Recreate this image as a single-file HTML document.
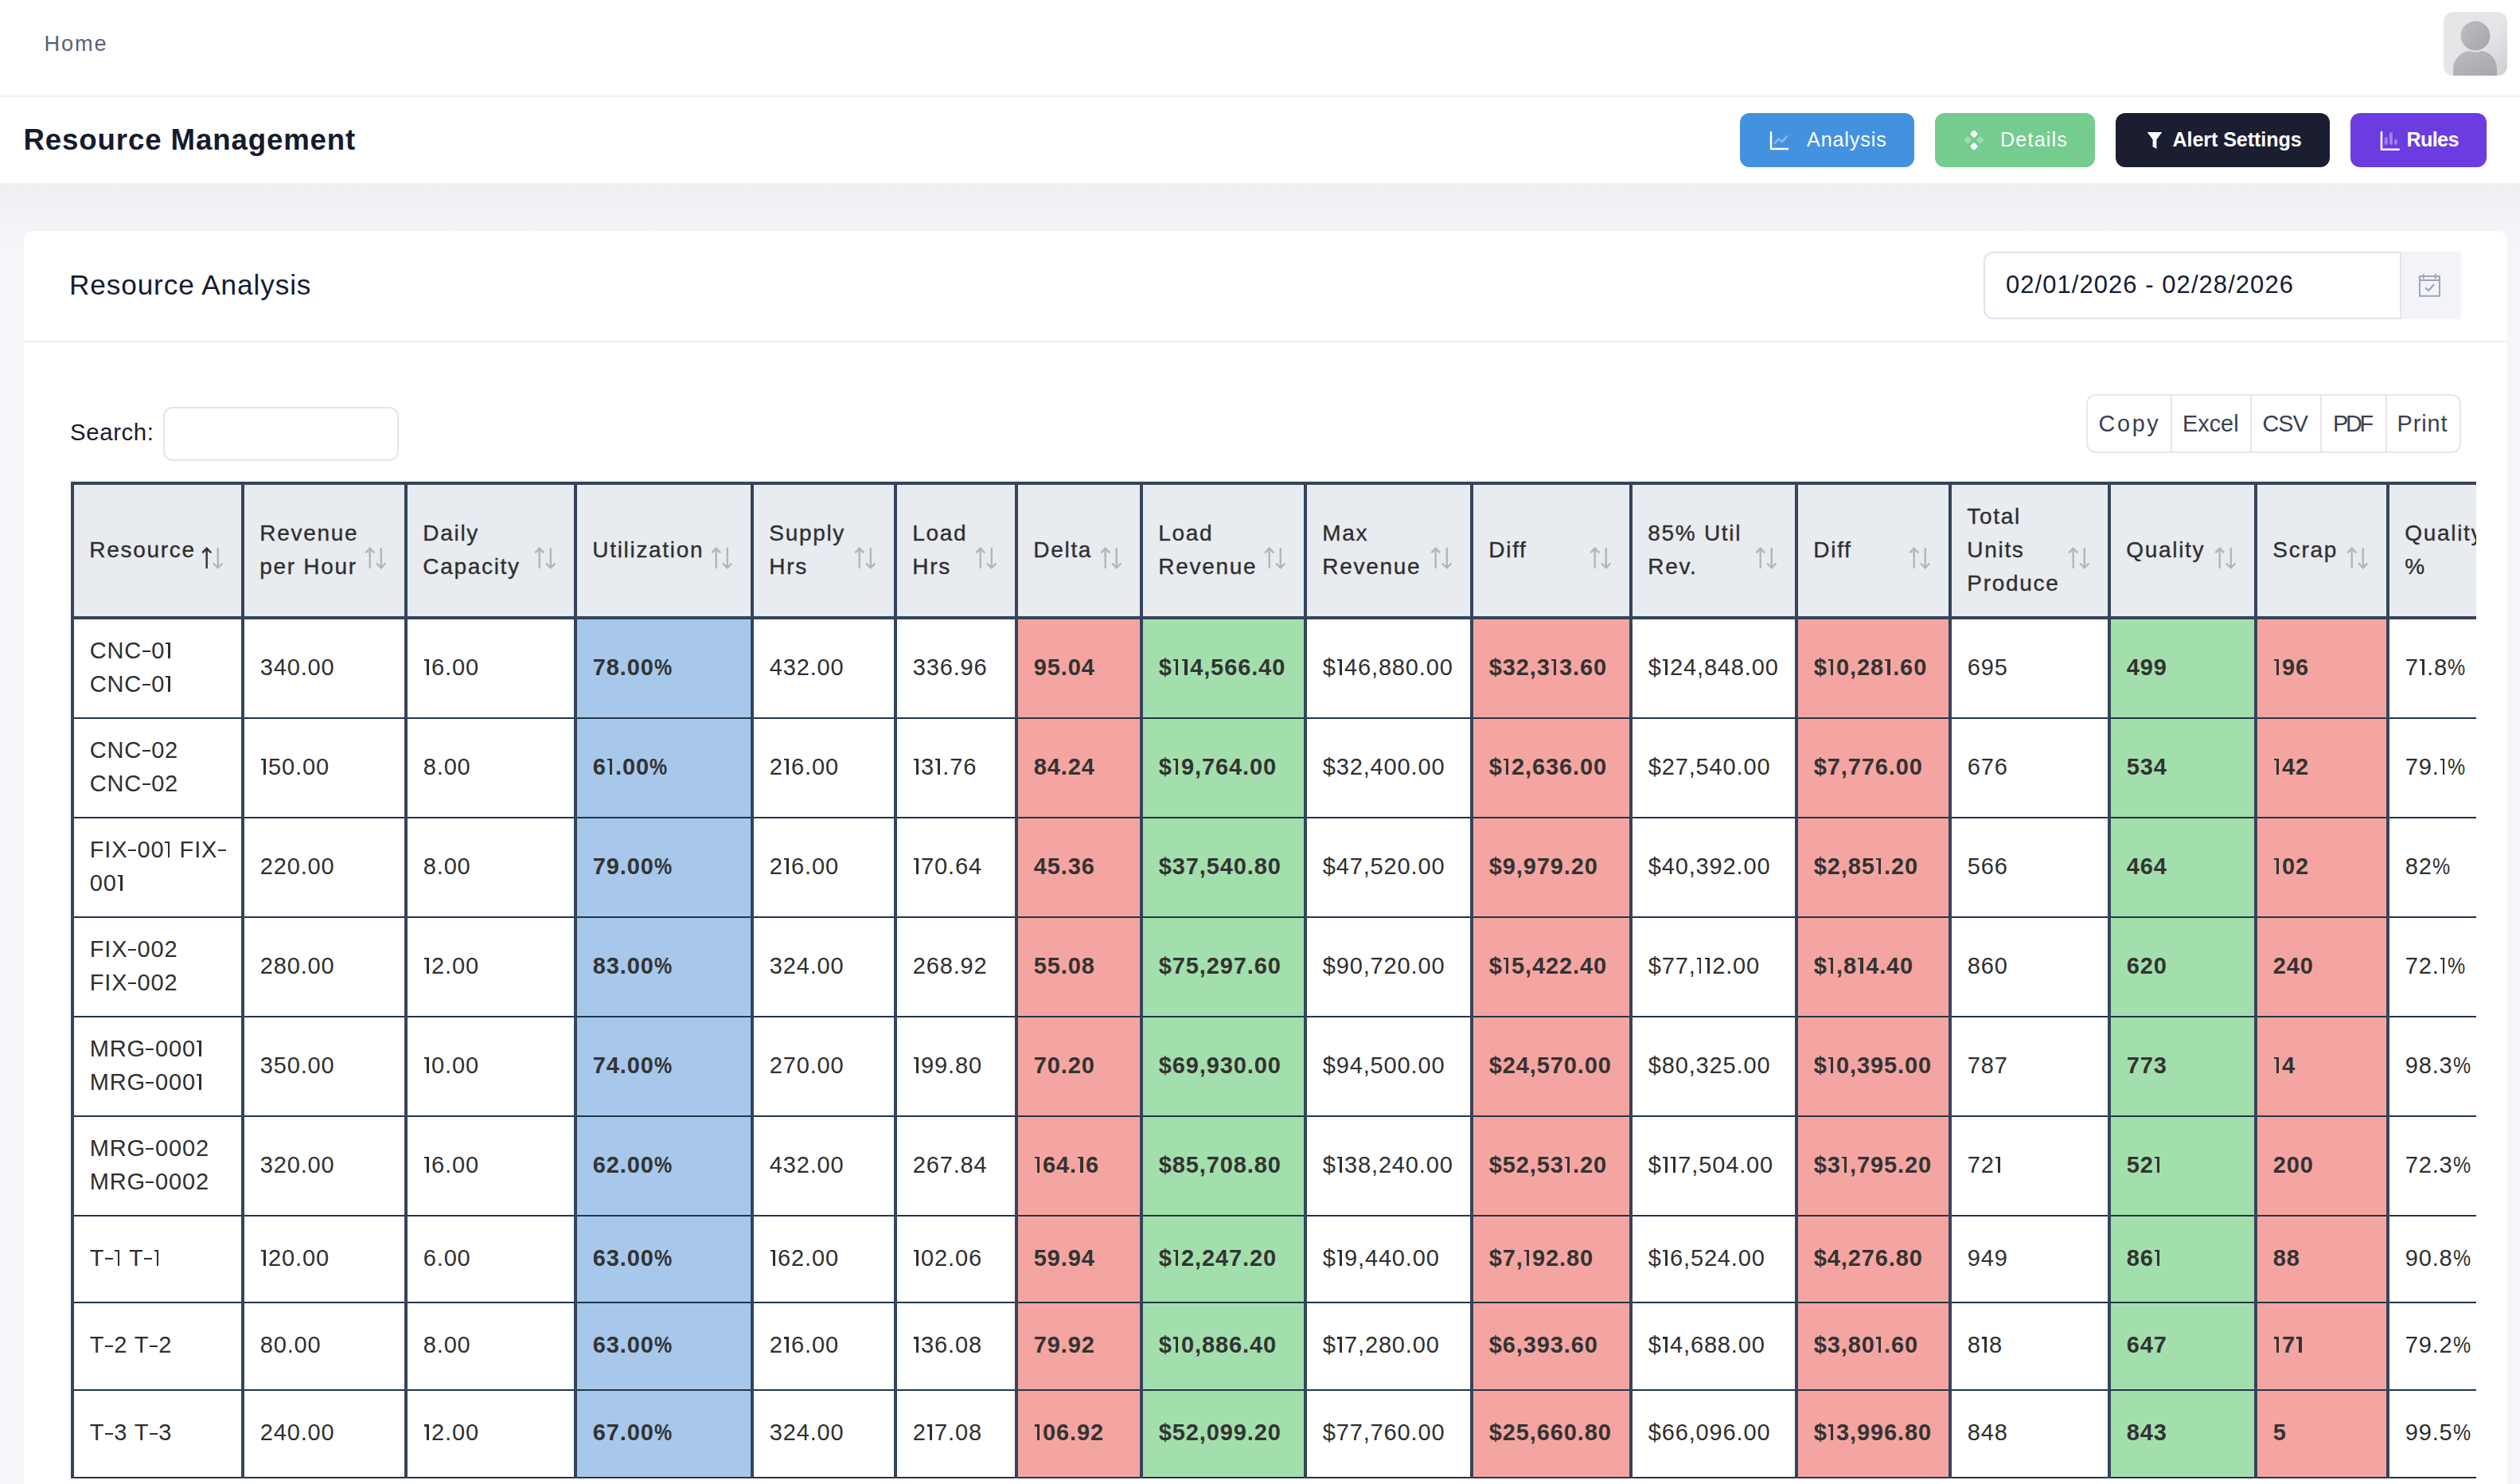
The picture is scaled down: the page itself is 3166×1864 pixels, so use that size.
<!DOCTYPE html>
<html>
<head>
<meta charset="utf-8">
<style>
*{box-sizing:border-box;margin:0;padding:0}
html,body{width:3166px;height:1864px;overflow:hidden;background:#f5f6f9}
body{font-family:"Liberation Sans",sans-serif;position:relative;color:#161b33}
.abs{position:absolute}
.t{position:absolute;white-space:nowrap}
#topbar{left:0;top:0;width:3166px;height:122px;background:#fff;border-bottom:2px solid #eef0f4}
#avatar{left:3070px;top:15px;width:80px;height:80px;border-radius:12px;overflow:hidden;background:linear-gradient(135deg,#e6e7e9 0%,#e4e5e7 55%,#cdced2 100%)}
#titlebar{left:0;top:122px;width:3166px;height:108px;background:#fff}
.btn{position:absolute;top:142px;height:68px;border-radius:12px}
.btn svg{position:absolute}
#grayshade{left:0;top:230px;width:3166px;height:80px;background:linear-gradient(#eeeff3,#f5f6f9)}
#card{left:30px;top:290px;width:3120px;height:1700px;background:#fff;border-radius:12px}
#cardhead{left:30px;top:428px;width:3120px;height:2px;background:#eff0f4}
#dateinput{left:2492px;top:316px;width:525px;height:85px;border:2px solid #e3e2ee;border-right:none;border-radius:12px 0 0 12px;background:#fff}
#dateaddon{left:3015px;top:316px;width:77px;height:85px;background:#f3f4f8;border-left:2px solid #e3e2ee}
#searchinput{left:205px;top:511px;width:296px;height:68px;border:2px solid #e4e3ee;border-radius:12px;background:#fff}
#btngroup{left:2621px;top:495px;width:471px;height:74px;border:2px solid #e6e6ee;border-radius:12px;background:#fff}
.gdiv{position:absolute;top:497px;width:2px;height:70px;background:#e6e6ee}
#tw .th{position:absolute;white-space:nowrap}
#tw .td{position:absolute;white-space:nowrap}
#tw .si{position:absolute}
#tw .si path{fill:none;stroke-width:2.4}
@media (min-resolution: 2dppx){html{zoom:0.5}}
</style>
</head>
<body>
<div id="topbar" class="abs"></div>
<div id="avatar" class="abs">
  <svg width="80" height="80" viewBox="0 0 80 80">
    <defs><linearGradient id="ag" x1="0" y1="0" x2="1" y2="1"><stop offset="0" stop-color="#bcbdc0"/><stop offset="1" stop-color="#a6a7ab"/></linearGradient></defs>
    <circle cx="40" cy="30" r="18.5" fill="url(#ag)"/>
    <path d="M12 80 V72 C12 58 24 49 33 49 Q40 52 47 49 C56 49 67 58 67 72 V80 Z" fill="url(#ag)"/>
  </svg>
</div>
<div id="titlebar" class="abs"></div>
<div class="btn" style="left:2186px;width:219px;background:#4392e0">
  <svg style="left:37px;top:22px" width="26" height="26" viewBox="0 0 26 26"><path d="M2 2.2 V23 H23" fill="none" stroke="#fff" stroke-width="2.5" stroke-linecap="round" stroke-linejoin="round"/><path d="M6.7 15.7 L11.6 10.4 L16.1 14.3 L21.9 7.1" fill="none" stroke="#fff" stroke-opacity="0.35" stroke-width="2.5" stroke-linecap="round" stroke-linejoin="round"/></svg>
</div>
<div class="btn" style="left:2431px;width:201px;background:#74cc8f">
  <svg style="left:36.5px;top:22.4px" width="24" height="24" viewBox="0 0 26 26"><rect x="9" y="0.5" width="8" height="8" rx="2.2" transform="rotate(45 13 4.5)" fill="#fff"/><rect x="9" y="17.5" width="8" height="8" rx="2.2" transform="rotate(45 13 21.5)" fill="#fff"/><rect x="0.5" y="9" width="8" height="8" rx="2.2" transform="rotate(45 4.5 13)" fill="#fff" fill-opacity="0.32"/><rect x="17.5" y="9" width="8" height="8" rx="2.2" transform="rotate(45 21.5 13)" fill="#fff" fill-opacity="0.32"/></svg>
</div>
<div class="btn" style="left:2658px;width:269px;background:#1b1d31">
  <svg style="left:39px;top:24px" width="20" height="22" viewBox="0 0 20 22"><path d="M0.7 0 H19.3 L12.4 9.3 V21 L7.6 18.3 V9.3 Z" fill="#fff"/></svg>
</div>
<div class="btn" style="left:2953px;width:171px;background:#6c3ce1">
  <svg style="left:37px;top:22px" width="26" height="26" viewBox="0 0 26 26"><path d="M2 2 V23.8 H23.8" fill="none" stroke="#fff" stroke-width="2.6" stroke-linecap="round" stroke-linejoin="round"/><rect x="5.8" y="8" width="3.9" height="10" rx="1.95" fill="#fff" fill-opacity="0.35"/><rect x="12" y="1.9" width="3.9" height="16.1" rx="1.95" fill="#fff" fill-opacity="0.35"/><rect x="18" y="10.7" width="3.9" height="7.3" rx="1.95" fill="#fff" fill-opacity="0.35"/></svg>
</div>
<div id="grayshade" class="abs"></div>
<div id="card" class="abs"></div>
<div id="dateinput" class="abs"></div>
<div id="dateaddon" class="abs">
  <svg style="position:absolute;left:21px;top:27px" width="30" height="30" viewBox="0 0 30 30"><rect x="2" y="4" width="25" height="24.8" fill="none" stroke="#a0a4b6" stroke-width="2"/><path d="M2 9 H27" stroke="#a0a4b6" stroke-width="2"/><path d="M6.9 2 V6.5 M21.9 2 V6.5" stroke="#a0a4b6" stroke-width="2" stroke-linecap="round"/><path d="M9 18.4 L13.2 21.9 L20.2 14" fill="none" stroke="#a0a4b6" stroke-width="2.2"/></svg>
</div>
<div id="cardhead" class="abs"></div>
<div id="searchinput" class="abs"></div>
<div id="btngroup" class="abs"></div>
<div class="gdiv" style="left:2727px"></div>
<div class="gdiv" style="left:2827px"></div>
<div class="gdiv" style="left:2915px"></div>
<div class="gdiv" style="left:2997px"></div>
<div id="home" class="t" style="left:55.50px;top:29.88px;font-size:27.18px;line-height:50px;color:#5b6078;font-weight:normal;letter-spacing:1.90px">Home</div><div id="title" class="t" style="left:29.50px;top:150.70px;font-size:36.63px;line-height:50px;color:#151a2e;font-weight:bold;letter-spacing:0.88px">Resource Management</div><div id="ratitle" class="t" style="left:87.00px;top:333.31px;font-size:35.18px;line-height:50px;color:#161b33;font-weight:normal;letter-spacing:0.88px">Resource Analysis</div><div id="datetext" class="t" style="left:2520.00px;top:333.17px;font-size:30.96px;line-height:50px;color:#161b33;font-weight:normal;letter-spacing:1.07px">02/01/2026 - 02/28/2026</div><div id="search" class="t" style="left:88.00px;top:518.32px;font-size:29.36px;line-height:50px;color:#161b33;font-weight:normal;letter-spacing:0.63px">Search:</div><div id="copy" class="t" style="left:2636.50px;top:506.82px;font-size:28.78px;line-height:50px;color:#3a3f51;font-weight:normal;letter-spacing:2.70px">Copy</div><div id="excel" class="t" style="left:2742.00px;top:506.82px;font-size:28.78px;line-height:50px;color:#3a3f51;font-weight:normal;letter-spacing:0.05px">Excel</div><div id="csv" class="t" style="left:2842.50px;top:506.82px;font-size:28.78px;line-height:50px;color:#3a3f51;font-weight:normal;letter-spacing:-0.90px">CSV</div><div id="pdf" class="t" style="left:2931.00px;top:506.82px;font-size:28.78px;line-height:50px;color:#3a3f51;font-weight:normal;letter-spacing:-3.20px">PDF</div><div id="print" class="t" style="left:3011.50px;top:506.82px;font-size:28.78px;line-height:50px;color:#3a3f51;font-weight:normal;letter-spacing:0.95px">Print</div><div id="analysis" class="t" style="left:2270.00px;top:150.28px;font-size:25.15px;line-height:50px;color:#ffffff;font-weight:normal;letter-spacing:0.87px">Analysis</div><div id="details" class="t" style="left:2513.00px;top:150.28px;font-size:25.15px;line-height:50px;color:#ffffff;font-weight:normal;letter-spacing:1.17px">Details</div><div id="alert" class="t" style="left:2729.50px;top:150.28px;font-size:25.15px;line-height:50px;color:#ffffff;font-weight:bold;letter-spacing:-0.10px">Alert Settings</div><div id="rules" class="t" style="left:3023.50px;top:150.28px;font-size:25.15px;line-height:50px;color:#ffffff;font-weight:bold;letter-spacing:-0.65px">Rules</div><div id="tw" style="position:absolute;left:89px;top:605px;width:3022px;height:1259px;overflow:hidden;background:#fff">
<div style="position:absolute;left:0px;top:0px;width:3121px;height:173px;background:#e8ebf0"></div>
<div style="position:absolute;left:636px;top:173px;width:218px;height:1077px;background:#a7c8eb"></div>
<div style="position:absolute;left:1190px;top:173px;width:153px;height:1077px;background:#f4a5a2"></div>
<div style="position:absolute;left:1347px;top:173px;width:202px;height:1077px;background:#a3dfad"></div>
<div style="position:absolute;left:1762px;top:173px;width:196px;height:1077px;background:#f4a5a2"></div>
<div style="position:absolute;left:2170px;top:173px;width:189px;height:1077px;background:#f4a5a2"></div>
<div style="position:absolute;left:2563px;top:173px;width:180px;height:1077px;background:#a3dfad"></div>
<div style="position:absolute;left:2747px;top:173px;width:162px;height:1077px;background:#f4a5a2"></div>
<div style="position:absolute;left:0px;top:0px;width:3121px;height:4px;background:#35445a"></div>
<div style="position:absolute;left:0px;top:169px;width:3121px;height:4px;background:#35445a"></div>
<div style="position:absolute;left:0px;top:296px;width:3121px;height:2px;background:#23354a"></div>
<div style="position:absolute;left:0px;top:421px;width:3121px;height:2px;background:#23354a"></div>
<div style="position:absolute;left:0px;top:546px;width:3121px;height:2px;background:#23354a"></div>
<div style="position:absolute;left:0px;top:671px;width:3121px;height:2px;background:#23354a"></div>
<div style="position:absolute;left:0px;top:796px;width:3121px;height:2px;background:#23354a"></div>
<div style="position:absolute;left:0px;top:921px;width:3121px;height:2px;background:#23354a"></div>
<div style="position:absolute;left:0px;top:1030px;width:3121px;height:2px;background:#23354a"></div>
<div style="position:absolute;left:0px;top:1140px;width:3121px;height:2px;background:#23354a"></div>
<div style="position:absolute;left:0px;top:1250px;width:3121px;height:2px;background:#23354a"></div>
<div style="position:absolute;left:0px;top:0px;width:4px;height:1252px;background:#35445a"></div>
<div style="position:absolute;left:214px;top:0px;width:4px;height:1252px;background:#35445a"></div>
<div style="position:absolute;left:419px;top:0px;width:4px;height:1252px;background:#35445a"></div>
<div style="position:absolute;left:632px;top:0px;width:4px;height:1252px;background:#35445a"></div>
<div style="position:absolute;left:854px;top:0px;width:4px;height:1252px;background:#35445a"></div>
<div style="position:absolute;left:1034px;top:0px;width:4px;height:1252px;background:#35445a"></div>
<div style="position:absolute;left:1186px;top:0px;width:4px;height:1252px;background:#35445a"></div>
<div style="position:absolute;left:1343px;top:0px;width:4px;height:1252px;background:#35445a"></div>
<div style="position:absolute;left:1549px;top:0px;width:4px;height:1252px;background:#35445a"></div>
<div style="position:absolute;left:1758px;top:0px;width:4px;height:1252px;background:#35445a"></div>
<div style="position:absolute;left:1958px;top:0px;width:4px;height:1252px;background:#35445a"></div>
<div style="position:absolute;left:2166px;top:0px;width:4px;height:1252px;background:#35445a"></div>
<div style="position:absolute;left:2359px;top:0px;width:4px;height:1252px;background:#35445a"></div>
<div style="position:absolute;left:2559px;top:0px;width:4px;height:1252px;background:#35445a"></div>
<div style="position:absolute;left:2743px;top:0px;width:4px;height:1252px;background:#35445a"></div>
<div style="position:absolute;left:2909px;top:0px;width:4px;height:1252px;background:#35445a"></div>
<style>#tw .pc{display:inline-block;transform:scaleX(0.86);transform-origin:0 50%}#tw .hy{display:inline-block;position:relative;width:10.00px;height:19px;margin:0 1.50px 0 0.50px;vertical-align:baseline}#tw .hy::before{content:"";position:absolute;left:0;right:0;bottom:7.2px;height:2.2px;background:currentColor}</style>
<style>#tw .o1,#tw .b1{display:inline-block;position:relative;height:19.90px;vertical-align:baseline}#tw .o1::before,#tw .b1::before,#tw .o1::after,#tw .b1::after{content:"";position:absolute;top:0;background:currentColor}#tw .o1{width:5.80px;margin:0 3.50px 0 1.00px}#tw .o1::before{right:0;bottom:0;width:2.50px}#tw .o1::after{left:0;width:3.80px;height:2.40px}#tw .b1{width:6.70px;margin:0 3.50px 0 1.00px}#tw .b1::before{right:0;bottom:0;width:3.80px}#tw .b1::after{left:0;width:3.40px;height:2.50px}</style>
<div id="h0" class="t th" style="left:23.36px;top:64.50px;font-size:28.00px;line-height:42px;color:#2f2f2f;font-weight:normal;letter-spacing:1.68px;-webkit-text-stroke:0.35px #2f2f2f">Resource</div>
<svg class="si" style="left:164px;top:81px" width="30" height="30" viewBox="0 0 30 30"><path d="M6.7 2.5 V28 M1.3 8.3 L6.7 2.8 L12.3 8.3" stroke="#333333"/><path d="M20.8 2 V27.5 M15 21.5 L20.8 27.3 L26.4 21.5" stroke="#b3b5b9"/></svg>
<div id="h1" class="t th" style="left:237.36px;top:43.50px;font-size:28.00px;line-height:42px;color:#2f2f2f;font-weight:normal;letter-spacing:1.68px;-webkit-text-stroke:0.35px #2f2f2f">Revenue<br>per Hour</div>
<svg class="si" style="left:369px;top:81px" width="30" height="30" viewBox="0 0 30 30"><path d="M6.7 2.5 V28 M1.3 8.3 L6.7 2.8 L12.3 8.3" stroke="#b3b5b9"/><path d="M20.8 2 V27.5 M15 21.5 L20.8 27.3 L26.4 21.5" stroke="#b3b5b9"/></svg>
<div id="h2" class="t th" style="left:442.36px;top:43.50px;font-size:28.00px;line-height:42px;color:#2f2f2f;font-weight:normal;letter-spacing:1.68px;-webkit-text-stroke:0.35px #2f2f2f">Daily<br>Capacity</div>
<svg class="si" style="left:582px;top:81px" width="30" height="30" viewBox="0 0 30 30"><path d="M6.7 2.5 V28 M1.3 8.3 L6.7 2.8 L12.3 8.3" stroke="#b3b5b9"/><path d="M20.8 2 V27.5 M15 21.5 L20.8 27.3 L26.4 21.5" stroke="#b3b5b9"/></svg>
<div id="h3" class="t th" style="left:655.36px;top:64.50px;font-size:28.00px;line-height:42px;color:#2f2f2f;font-weight:normal;letter-spacing:1.68px;-webkit-text-stroke:0.35px #2f2f2f">Utilization</div>
<svg class="si" style="left:804px;top:81px" width="30" height="30" viewBox="0 0 30 30"><path d="M6.7 2.5 V28 M1.3 8.3 L6.7 2.8 L12.3 8.3" stroke="#b3b5b9"/><path d="M20.8 2 V27.5 M15 21.5 L20.8 27.3 L26.4 21.5" stroke="#b3b5b9"/></svg>
<div id="h4" class="t th" style="left:877.36px;top:43.50px;font-size:28.00px;line-height:42px;color:#2f2f2f;font-weight:normal;letter-spacing:1.68px;-webkit-text-stroke:0.35px #2f2f2f">Supply<br>Hrs</div>
<svg class="si" style="left:984px;top:81px" width="30" height="30" viewBox="0 0 30 30"><path d="M6.7 2.5 V28 M1.3 8.3 L6.7 2.8 L12.3 8.3" stroke="#b3b5b9"/><path d="M20.8 2 V27.5 M15 21.5 L20.8 27.3 L26.4 21.5" stroke="#b3b5b9"/></svg>
<div id="h5" class="t th" style="left:1057.36px;top:43.50px;font-size:28.00px;line-height:42px;color:#2f2f2f;font-weight:normal;letter-spacing:1.68px;-webkit-text-stroke:0.35px #2f2f2f">Load<br>Hrs</div>
<svg class="si" style="left:1136px;top:81px" width="30" height="30" viewBox="0 0 30 30"><path d="M6.7 2.5 V28 M1.3 8.3 L6.7 2.8 L12.3 8.3" stroke="#b3b5b9"/><path d="M20.8 2 V27.5 M15 21.5 L20.8 27.3 L26.4 21.5" stroke="#b3b5b9"/></svg>
<div id="h6" class="t th" style="left:1209.36px;top:64.50px;font-size:28.00px;line-height:42px;color:#2f2f2f;font-weight:normal;letter-spacing:1.68px;-webkit-text-stroke:0.35px #2f2f2f">Delta</div>
<svg class="si" style="left:1293px;top:81px" width="30" height="30" viewBox="0 0 30 30"><path d="M6.7 2.5 V28 M1.3 8.3 L6.7 2.8 L12.3 8.3" stroke="#b3b5b9"/><path d="M20.8 2 V27.5 M15 21.5 L20.8 27.3 L26.4 21.5" stroke="#b3b5b9"/></svg>
<div id="h7" class="t th" style="left:1366.36px;top:43.50px;font-size:28.00px;line-height:42px;color:#2f2f2f;font-weight:normal;letter-spacing:1.68px;-webkit-text-stroke:0.35px #2f2f2f">Load<br>Revenue</div>
<svg class="si" style="left:1499px;top:81px" width="30" height="30" viewBox="0 0 30 30"><path d="M6.7 2.5 V28 M1.3 8.3 L6.7 2.8 L12.3 8.3" stroke="#b3b5b9"/><path d="M20.8 2 V27.5 M15 21.5 L20.8 27.3 L26.4 21.5" stroke="#b3b5b9"/></svg>
<div id="h8" class="t th" style="left:1572.36px;top:43.50px;font-size:28.00px;line-height:42px;color:#2f2f2f;font-weight:normal;letter-spacing:1.68px;-webkit-text-stroke:0.35px #2f2f2f">Max<br>Revenue</div>
<svg class="si" style="left:1708px;top:81px" width="30" height="30" viewBox="0 0 30 30"><path d="M6.7 2.5 V28 M1.3 8.3 L6.7 2.8 L12.3 8.3" stroke="#b3b5b9"/><path d="M20.8 2 V27.5 M15 21.5 L20.8 27.3 L26.4 21.5" stroke="#b3b5b9"/></svg>
<div id="h9" class="t th" style="left:1781.36px;top:64.50px;font-size:28.00px;line-height:42px;color:#2f2f2f;font-weight:normal;letter-spacing:1.68px;-webkit-text-stroke:0.35px #2f2f2f">Diff</div>
<svg class="si" style="left:1908px;top:81px" width="30" height="30" viewBox="0 0 30 30"><path d="M6.7 2.5 V28 M1.3 8.3 L6.7 2.8 L12.3 8.3" stroke="#b3b5b9"/><path d="M20.8 2 V27.5 M15 21.5 L20.8 27.3 L26.4 21.5" stroke="#b3b5b9"/></svg>
<div id="h10" class="t th" style="left:1981.36px;top:43.50px;font-size:28.00px;line-height:42px;color:#2f2f2f;font-weight:normal;letter-spacing:1.68px;-webkit-text-stroke:0.35px #2f2f2f">85% Util<br>Rev.</div>
<svg class="si" style="left:2116px;top:81px" width="30" height="30" viewBox="0 0 30 30"><path d="M6.7 2.5 V28 M1.3 8.3 L6.7 2.8 L12.3 8.3" stroke="#b3b5b9"/><path d="M20.8 2 V27.5 M15 21.5 L20.8 27.3 L26.4 21.5" stroke="#b3b5b9"/></svg>
<div id="h11" class="t th" style="left:2189.36px;top:64.50px;font-size:28.00px;line-height:42px;color:#2f2f2f;font-weight:normal;letter-spacing:1.68px;-webkit-text-stroke:0.35px #2f2f2f">Diff</div>
<svg class="si" style="left:2309px;top:81px" width="30" height="30" viewBox="0 0 30 30"><path d="M6.7 2.5 V28 M1.3 8.3 L6.7 2.8 L12.3 8.3" stroke="#b3b5b9"/><path d="M20.8 2 V27.5 M15 21.5 L20.8 27.3 L26.4 21.5" stroke="#b3b5b9"/></svg>
<div id="h12" class="t th" style="left:2382.36px;top:22.50px;font-size:28.00px;line-height:42px;color:#2f2f2f;font-weight:normal;letter-spacing:1.68px;-webkit-text-stroke:0.35px #2f2f2f">Total<br>Units<br>Produce</div>
<svg class="si" style="left:2509px;top:81px" width="30" height="30" viewBox="0 0 30 30"><path d="M6.7 2.5 V28 M1.3 8.3 L6.7 2.8 L12.3 8.3" stroke="#b3b5b9"/><path d="M20.8 2 V27.5 M15 21.5 L20.8 27.3 L26.4 21.5" stroke="#b3b5b9"/></svg>
<div id="h13" class="t th" style="left:2582.36px;top:64.50px;font-size:28.00px;line-height:42px;color:#2f2f2f;font-weight:normal;letter-spacing:1.68px;-webkit-text-stroke:0.35px #2f2f2f">Quality</div>
<svg class="si" style="left:2693px;top:81px" width="30" height="30" viewBox="0 0 30 30"><path d="M6.7 2.5 V28 M1.3 8.3 L6.7 2.8 L12.3 8.3" stroke="#b3b5b9"/><path d="M20.8 2 V27.5 M15 21.5 L20.8 27.3 L26.4 21.5" stroke="#b3b5b9"/></svg>
<div id="h14" class="t th" style="left:2766.36px;top:64.50px;font-size:28.00px;line-height:42px;color:#2f2f2f;font-weight:normal;letter-spacing:1.68px;-webkit-text-stroke:0.35px #2f2f2f">Scrap</div>
<svg class="si" style="left:2859px;top:81px" width="30" height="30" viewBox="0 0 30 30"><path d="M6.7 2.5 V28 M1.3 8.3 L6.7 2.8 L12.3 8.3" stroke="#b3b5b9"/><path d="M20.8 2 V27.5 M15 21.5 L20.8 27.3 L26.4 21.5" stroke="#b3b5b9"/></svg>
<div id="h15" class="t th" style="left:2932.36px;top:43.50px;font-size:28.00px;line-height:42px;color:#2f2f2f;font-weight:normal;letter-spacing:1.68px;-webkit-text-stroke:0.35px #2f2f2f">Quality<br>%</div>
<svg class="si" style="left:3071px;top:81px" width="30" height="30" viewBox="0 0 30 30"><path d="M6.7 2.5 V28 M1.3 8.3 L6.7 2.8 L12.3 8.3" stroke="#b3b5b9"/><path d="M20.8 2 V27.5 M15 21.5 L20.8 27.3 L26.4 21.5" stroke="#b3b5b9"/></svg>
<div id="c0_0" class="t td" style="left:23.75px;top:190.50px;font-size:29.00px;line-height:42px;color:#2f2f2f;font-weight:normal;letter-spacing:0.85px">CNC<span class="hy"></span>0<span class="o1"></span><br>CNC<span class="hy"></span>0<span class="o1"></span></div>
<div id="c0_1" class="t td" style="left:237.75px;top:211.50px;font-size:29.00px;line-height:42px;color:#2f2f2f;font-weight:normal;letter-spacing:0.85px">340.00</div>
<div id="c0_2" class="t td" style="left:442.75px;top:211.50px;font-size:29.00px;line-height:42px;color:#2f2f2f;font-weight:normal;letter-spacing:0.85px"><span class="o1"></span>6.00</div>
<div id="c0_3" class="t td" style="left:655.75px;top:211.50px;font-size:29.00px;line-height:42px;color:#333333;font-weight:bold;letter-spacing:0.89px">78.00<span class="pc">%</span></div>
<div id="c0_4" class="t td" style="left:877.75px;top:211.50px;font-size:29.00px;line-height:42px;color:#2f2f2f;font-weight:normal;letter-spacing:0.85px">432.00</div>
<div id="c0_5" class="t td" style="left:1057.75px;top:211.50px;font-size:29.00px;line-height:42px;color:#2f2f2f;font-weight:normal;letter-spacing:0.85px">336.96</div>
<div id="c0_6" class="t td" style="left:1209.75px;top:211.50px;font-size:29.00px;line-height:42px;color:#333333;font-weight:bold;letter-spacing:0.89px">95.04</div>
<div id="c0_7" class="t td" style="left:1366.75px;top:211.50px;font-size:29.00px;line-height:42px;color:#333333;font-weight:bold;letter-spacing:0.89px">$<span class="b1"></span><span class="b1"></span>4,566.40</div>
<div id="c0_8" class="t td" style="left:1572.75px;top:211.50px;font-size:29.00px;line-height:42px;color:#2f2f2f;font-weight:normal;letter-spacing:0.85px">$<span class="o1"></span>46,880.00</div>
<div id="c0_9" class="t td" style="left:1781.75px;top:211.50px;font-size:29.00px;line-height:42px;color:#333333;font-weight:bold;letter-spacing:0.89px">$32,3<span class="b1"></span>3.60</div>
<div id="c0_10" class="t td" style="left:1981.75px;top:211.50px;font-size:29.00px;line-height:42px;color:#2f2f2f;font-weight:normal;letter-spacing:0.85px">$<span class="o1"></span>24,848.00</div>
<div id="c0_11" class="t td" style="left:2189.75px;top:211.50px;font-size:29.00px;line-height:42px;color:#333333;font-weight:bold;letter-spacing:0.89px">$<span class="b1"></span>0,28<span class="b1"></span>.60</div>
<div id="c0_12" class="t td" style="left:2382.75px;top:211.50px;font-size:29.00px;line-height:42px;color:#2f2f2f;font-weight:normal;letter-spacing:0.85px">695</div>
<div id="c0_13" class="t td" style="left:2582.75px;top:211.50px;font-size:29.00px;line-height:42px;color:#333333;font-weight:bold;letter-spacing:0.89px">499</div>
<div id="c0_14" class="t td" style="left:2766.75px;top:211.50px;font-size:29.00px;line-height:42px;color:#333333;font-weight:bold;letter-spacing:0.89px"><span class="b1"></span>96</div>
<div id="c0_15" class="t td" style="left:2932.75px;top:211.50px;font-size:29.00px;line-height:42px;color:#2f2f2f;font-weight:normal;letter-spacing:0.85px">7<span class="o1"></span>.8<span class="pc">%</span></div>
<div id="c1_0" class="t td" style="left:23.75px;top:315.50px;font-size:29.00px;line-height:42px;color:#2f2f2f;font-weight:normal;letter-spacing:0.85px">CNC<span class="hy"></span>02<br>CNC<span class="hy"></span>02</div>
<div id="c1_1" class="t td" style="left:237.75px;top:336.50px;font-size:29.00px;line-height:42px;color:#2f2f2f;font-weight:normal;letter-spacing:0.85px"><span class="o1"></span>50.00</div>
<div id="c1_2" class="t td" style="left:442.75px;top:336.50px;font-size:29.00px;line-height:42px;color:#2f2f2f;font-weight:normal;letter-spacing:0.85px">8.00</div>
<div id="c1_3" class="t td" style="left:655.75px;top:336.50px;font-size:29.00px;line-height:42px;color:#333333;font-weight:bold;letter-spacing:0.89px">6<span class="b1"></span>.00<span class="pc">%</span></div>
<div id="c1_4" class="t td" style="left:877.75px;top:336.50px;font-size:29.00px;line-height:42px;color:#2f2f2f;font-weight:normal;letter-spacing:0.85px">2<span class="o1"></span>6.00</div>
<div id="c1_5" class="t td" style="left:1057.75px;top:336.50px;font-size:29.00px;line-height:42px;color:#2f2f2f;font-weight:normal;letter-spacing:0.85px"><span class="o1"></span>3<span class="o1"></span>.76</div>
<div id="c1_6" class="t td" style="left:1209.75px;top:336.50px;font-size:29.00px;line-height:42px;color:#333333;font-weight:bold;letter-spacing:0.89px">84.24</div>
<div id="c1_7" class="t td" style="left:1366.75px;top:336.50px;font-size:29.00px;line-height:42px;color:#333333;font-weight:bold;letter-spacing:0.89px">$<span class="b1"></span>9,764.00</div>
<div id="c1_8" class="t td" style="left:1572.75px;top:336.50px;font-size:29.00px;line-height:42px;color:#2f2f2f;font-weight:normal;letter-spacing:0.85px">$32,400.00</div>
<div id="c1_9" class="t td" style="left:1781.75px;top:336.50px;font-size:29.00px;line-height:42px;color:#333333;font-weight:bold;letter-spacing:0.89px">$<span class="b1"></span>2,636.00</div>
<div id="c1_10" class="t td" style="left:1981.75px;top:336.50px;font-size:29.00px;line-height:42px;color:#2f2f2f;font-weight:normal;letter-spacing:0.85px">$27,540.00</div>
<div id="c1_11" class="t td" style="left:2189.75px;top:336.50px;font-size:29.00px;line-height:42px;color:#333333;font-weight:bold;letter-spacing:0.89px">$7,776.00</div>
<div id="c1_12" class="t td" style="left:2382.75px;top:336.50px;font-size:29.00px;line-height:42px;color:#2f2f2f;font-weight:normal;letter-spacing:0.85px">676</div>
<div id="c1_13" class="t td" style="left:2582.75px;top:336.50px;font-size:29.00px;line-height:42px;color:#333333;font-weight:bold;letter-spacing:0.89px">534</div>
<div id="c1_14" class="t td" style="left:2766.75px;top:336.50px;font-size:29.00px;line-height:42px;color:#333333;font-weight:bold;letter-spacing:0.89px"><span class="b1"></span>42</div>
<div id="c1_15" class="t td" style="left:2932.75px;top:336.50px;font-size:29.00px;line-height:42px;color:#2f2f2f;font-weight:normal;letter-spacing:0.85px">79.<span class="o1"></span><span class="pc">%</span></div>
<div id="c2_0" class="t td" style="left:23.75px;top:440.50px;font-size:29.00px;line-height:42px;color:#2f2f2f;font-weight:normal;letter-spacing:0.85px">FIX<span class="hy"></span>00<span class="o1"></span> FIX<span class="hy"></span><br>00<span class="o1"></span></div>
<div id="c2_1" class="t td" style="left:237.75px;top:461.50px;font-size:29.00px;line-height:42px;color:#2f2f2f;font-weight:normal;letter-spacing:0.85px">220.00</div>
<div id="c2_2" class="t td" style="left:442.75px;top:461.50px;font-size:29.00px;line-height:42px;color:#2f2f2f;font-weight:normal;letter-spacing:0.85px">8.00</div>
<div id="c2_3" class="t td" style="left:655.75px;top:461.50px;font-size:29.00px;line-height:42px;color:#333333;font-weight:bold;letter-spacing:0.89px">79.00<span class="pc">%</span></div>
<div id="c2_4" class="t td" style="left:877.75px;top:461.50px;font-size:29.00px;line-height:42px;color:#2f2f2f;font-weight:normal;letter-spacing:0.85px">2<span class="o1"></span>6.00</div>
<div id="c2_5" class="t td" style="left:1057.75px;top:461.50px;font-size:29.00px;line-height:42px;color:#2f2f2f;font-weight:normal;letter-spacing:0.85px"><span class="o1"></span>70.64</div>
<div id="c2_6" class="t td" style="left:1209.75px;top:461.50px;font-size:29.00px;line-height:42px;color:#333333;font-weight:bold;letter-spacing:0.89px">45.36</div>
<div id="c2_7" class="t td" style="left:1366.75px;top:461.50px;font-size:29.00px;line-height:42px;color:#333333;font-weight:bold;letter-spacing:0.89px">$37,540.80</div>
<div id="c2_8" class="t td" style="left:1572.75px;top:461.50px;font-size:29.00px;line-height:42px;color:#2f2f2f;font-weight:normal;letter-spacing:0.85px">$47,520.00</div>
<div id="c2_9" class="t td" style="left:1781.75px;top:461.50px;font-size:29.00px;line-height:42px;color:#333333;font-weight:bold;letter-spacing:0.89px">$9,979.20</div>
<div id="c2_10" class="t td" style="left:1981.75px;top:461.50px;font-size:29.00px;line-height:42px;color:#2f2f2f;font-weight:normal;letter-spacing:0.85px">$40,392.00</div>
<div id="c2_11" class="t td" style="left:2189.75px;top:461.50px;font-size:29.00px;line-height:42px;color:#333333;font-weight:bold;letter-spacing:0.89px">$2,85<span class="b1"></span>.20</div>
<div id="c2_12" class="t td" style="left:2382.75px;top:461.50px;font-size:29.00px;line-height:42px;color:#2f2f2f;font-weight:normal;letter-spacing:0.85px">566</div>
<div id="c2_13" class="t td" style="left:2582.75px;top:461.50px;font-size:29.00px;line-height:42px;color:#333333;font-weight:bold;letter-spacing:0.89px">464</div>
<div id="c2_14" class="t td" style="left:2766.75px;top:461.50px;font-size:29.00px;line-height:42px;color:#333333;font-weight:bold;letter-spacing:0.89px"><span class="b1"></span>02</div>
<div id="c2_15" class="t td" style="left:2932.75px;top:461.50px;font-size:29.00px;line-height:42px;color:#2f2f2f;font-weight:normal;letter-spacing:0.85px">82<span class="pc">%</span></div>
<div id="c3_0" class="t td" style="left:23.75px;top:565.50px;font-size:29.00px;line-height:42px;color:#2f2f2f;font-weight:normal;letter-spacing:0.85px">FIX<span class="hy"></span>002<br>FIX<span class="hy"></span>002</div>
<div id="c3_1" class="t td" style="left:237.75px;top:586.50px;font-size:29.00px;line-height:42px;color:#2f2f2f;font-weight:normal;letter-spacing:0.85px">280.00</div>
<div id="c3_2" class="t td" style="left:442.75px;top:586.50px;font-size:29.00px;line-height:42px;color:#2f2f2f;font-weight:normal;letter-spacing:0.85px"><span class="o1"></span>2.00</div>
<div id="c3_3" class="t td" style="left:655.75px;top:586.50px;font-size:29.00px;line-height:42px;color:#333333;font-weight:bold;letter-spacing:0.89px">83.00<span class="pc">%</span></div>
<div id="c3_4" class="t td" style="left:877.75px;top:586.50px;font-size:29.00px;line-height:42px;color:#2f2f2f;font-weight:normal;letter-spacing:0.85px">324.00</div>
<div id="c3_5" class="t td" style="left:1057.75px;top:586.50px;font-size:29.00px;line-height:42px;color:#2f2f2f;font-weight:normal;letter-spacing:0.85px">268.92</div>
<div id="c3_6" class="t td" style="left:1209.75px;top:586.50px;font-size:29.00px;line-height:42px;color:#333333;font-weight:bold;letter-spacing:0.89px">55.08</div>
<div id="c3_7" class="t td" style="left:1366.75px;top:586.50px;font-size:29.00px;line-height:42px;color:#333333;font-weight:bold;letter-spacing:0.89px">$75,297.60</div>
<div id="c3_8" class="t td" style="left:1572.75px;top:586.50px;font-size:29.00px;line-height:42px;color:#2f2f2f;font-weight:normal;letter-spacing:0.85px">$90,720.00</div>
<div id="c3_9" class="t td" style="left:1781.75px;top:586.50px;font-size:29.00px;line-height:42px;color:#333333;font-weight:bold;letter-spacing:0.89px">$<span class="b1"></span>5,422.40</div>
<div id="c3_10" class="t td" style="left:1981.75px;top:586.50px;font-size:29.00px;line-height:42px;color:#2f2f2f;font-weight:normal;letter-spacing:0.85px">$77,<span class="o1"></span><span class="o1"></span>2.00</div>
<div id="c3_11" class="t td" style="left:2189.75px;top:586.50px;font-size:29.00px;line-height:42px;color:#333333;font-weight:bold;letter-spacing:0.89px">$<span class="b1"></span>,8<span class="b1"></span>4.40</div>
<div id="c3_12" class="t td" style="left:2382.75px;top:586.50px;font-size:29.00px;line-height:42px;color:#2f2f2f;font-weight:normal;letter-spacing:0.85px">860</div>
<div id="c3_13" class="t td" style="left:2582.75px;top:586.50px;font-size:29.00px;line-height:42px;color:#333333;font-weight:bold;letter-spacing:0.89px">620</div>
<div id="c3_14" class="t td" style="left:2766.75px;top:586.50px;font-size:29.00px;line-height:42px;color:#333333;font-weight:bold;letter-spacing:0.89px">240</div>
<div id="c3_15" class="t td" style="left:2932.75px;top:586.50px;font-size:29.00px;line-height:42px;color:#2f2f2f;font-weight:normal;letter-spacing:0.85px">72.<span class="o1"></span><span class="pc">%</span></div>
<div id="c4_0" class="t td" style="left:23.75px;top:690.50px;font-size:29.00px;line-height:42px;color:#2f2f2f;font-weight:normal;letter-spacing:0.85px">MRG<span class="hy"></span>000<span class="o1"></span><br>MRG<span class="hy"></span>000<span class="o1"></span></div>
<div id="c4_1" class="t td" style="left:237.75px;top:711.50px;font-size:29.00px;line-height:42px;color:#2f2f2f;font-weight:normal;letter-spacing:0.85px">350.00</div>
<div id="c4_2" class="t td" style="left:442.75px;top:711.50px;font-size:29.00px;line-height:42px;color:#2f2f2f;font-weight:normal;letter-spacing:0.85px"><span class="o1"></span>0.00</div>
<div id="c4_3" class="t td" style="left:655.75px;top:711.50px;font-size:29.00px;line-height:42px;color:#333333;font-weight:bold;letter-spacing:0.89px">74.00<span class="pc">%</span></div>
<div id="c4_4" class="t td" style="left:877.75px;top:711.50px;font-size:29.00px;line-height:42px;color:#2f2f2f;font-weight:normal;letter-spacing:0.85px">270.00</div>
<div id="c4_5" class="t td" style="left:1057.75px;top:711.50px;font-size:29.00px;line-height:42px;color:#2f2f2f;font-weight:normal;letter-spacing:0.85px"><span class="o1"></span>99.80</div>
<div id="c4_6" class="t td" style="left:1209.75px;top:711.50px;font-size:29.00px;line-height:42px;color:#333333;font-weight:bold;letter-spacing:0.89px">70.20</div>
<div id="c4_7" class="t td" style="left:1366.75px;top:711.50px;font-size:29.00px;line-height:42px;color:#333333;font-weight:bold;letter-spacing:0.89px">$69,930.00</div>
<div id="c4_8" class="t td" style="left:1572.75px;top:711.50px;font-size:29.00px;line-height:42px;color:#2f2f2f;font-weight:normal;letter-spacing:0.85px">$94,500.00</div>
<div id="c4_9" class="t td" style="left:1781.75px;top:711.50px;font-size:29.00px;line-height:42px;color:#333333;font-weight:bold;letter-spacing:0.89px">$24,570.00</div>
<div id="c4_10" class="t td" style="left:1981.75px;top:711.50px;font-size:29.00px;line-height:42px;color:#2f2f2f;font-weight:normal;letter-spacing:0.85px">$80,325.00</div>
<div id="c4_11" class="t td" style="left:2189.75px;top:711.50px;font-size:29.00px;line-height:42px;color:#333333;font-weight:bold;letter-spacing:0.89px">$<span class="b1"></span>0,395.00</div>
<div id="c4_12" class="t td" style="left:2382.75px;top:711.50px;font-size:29.00px;line-height:42px;color:#2f2f2f;font-weight:normal;letter-spacing:0.85px">787</div>
<div id="c4_13" class="t td" style="left:2582.75px;top:711.50px;font-size:29.00px;line-height:42px;color:#333333;font-weight:bold;letter-spacing:0.89px">773</div>
<div id="c4_14" class="t td" style="left:2766.75px;top:711.50px;font-size:29.00px;line-height:42px;color:#333333;font-weight:bold;letter-spacing:0.89px"><span class="b1"></span>4</div>
<div id="c4_15" class="t td" style="left:2932.75px;top:711.50px;font-size:29.00px;line-height:42px;color:#2f2f2f;font-weight:normal;letter-spacing:0.85px">98.3<span class="pc">%</span></div>
<div id="c5_0" class="t td" style="left:23.75px;top:815.50px;font-size:29.00px;line-height:42px;color:#2f2f2f;font-weight:normal;letter-spacing:0.85px">MRG<span class="hy"></span>0002<br>MRG<span class="hy"></span>0002</div>
<div id="c5_1" class="t td" style="left:237.75px;top:836.50px;font-size:29.00px;line-height:42px;color:#2f2f2f;font-weight:normal;letter-spacing:0.85px">320.00</div>
<div id="c5_2" class="t td" style="left:442.75px;top:836.50px;font-size:29.00px;line-height:42px;color:#2f2f2f;font-weight:normal;letter-spacing:0.85px"><span class="o1"></span>6.00</div>
<div id="c5_3" class="t td" style="left:655.75px;top:836.50px;font-size:29.00px;line-height:42px;color:#333333;font-weight:bold;letter-spacing:0.89px">62.00<span class="pc">%</span></div>
<div id="c5_4" class="t td" style="left:877.75px;top:836.50px;font-size:29.00px;line-height:42px;color:#2f2f2f;font-weight:normal;letter-spacing:0.85px">432.00</div>
<div id="c5_5" class="t td" style="left:1057.75px;top:836.50px;font-size:29.00px;line-height:42px;color:#2f2f2f;font-weight:normal;letter-spacing:0.85px">267.84</div>
<div id="c5_6" class="t td" style="left:1209.75px;top:836.50px;font-size:29.00px;line-height:42px;color:#333333;font-weight:bold;letter-spacing:0.89px"><span class="b1"></span>64.<span class="b1"></span>6</div>
<div id="c5_7" class="t td" style="left:1366.75px;top:836.50px;font-size:29.00px;line-height:42px;color:#333333;font-weight:bold;letter-spacing:0.89px">$85,708.80</div>
<div id="c5_8" class="t td" style="left:1572.75px;top:836.50px;font-size:29.00px;line-height:42px;color:#2f2f2f;font-weight:normal;letter-spacing:0.85px">$<span class="o1"></span>38,240.00</div>
<div id="c5_9" class="t td" style="left:1781.75px;top:836.50px;font-size:29.00px;line-height:42px;color:#333333;font-weight:bold;letter-spacing:0.89px">$52,53<span class="b1"></span>.20</div>
<div id="c5_10" class="t td" style="left:1981.75px;top:836.50px;font-size:29.00px;line-height:42px;color:#2f2f2f;font-weight:normal;letter-spacing:0.85px">$<span class="o1"></span><span class="o1"></span>7,504.00</div>
<div id="c5_11" class="t td" style="left:2189.75px;top:836.50px;font-size:29.00px;line-height:42px;color:#333333;font-weight:bold;letter-spacing:0.89px">$3<span class="b1"></span>,795.20</div>
<div id="c5_12" class="t td" style="left:2382.75px;top:836.50px;font-size:29.00px;line-height:42px;color:#2f2f2f;font-weight:normal;letter-spacing:0.85px">72<span class="o1"></span></div>
<div id="c5_13" class="t td" style="left:2582.75px;top:836.50px;font-size:29.00px;line-height:42px;color:#333333;font-weight:bold;letter-spacing:0.89px">52<span class="b1"></span></div>
<div id="c5_14" class="t td" style="left:2766.75px;top:836.50px;font-size:29.00px;line-height:42px;color:#333333;font-weight:bold;letter-spacing:0.89px">200</div>
<div id="c5_15" class="t td" style="left:2932.75px;top:836.50px;font-size:29.00px;line-height:42px;color:#2f2f2f;font-weight:normal;letter-spacing:0.85px">72.3<span class="pc">%</span></div>
<div id="c6_0" class="t td" style="left:23.75px;top:953.50px;font-size:29.00px;line-height:42px;color:#2f2f2f;font-weight:normal;letter-spacing:0.85px">T<span class="hy"></span><span class="o1"></span> T<span class="hy"></span><span class="o1"></span></div>
<div id="c6_1" class="t td" style="left:237.75px;top:953.50px;font-size:29.00px;line-height:42px;color:#2f2f2f;font-weight:normal;letter-spacing:0.85px"><span class="o1"></span>20.00</div>
<div id="c6_2" class="t td" style="left:442.75px;top:953.50px;font-size:29.00px;line-height:42px;color:#2f2f2f;font-weight:normal;letter-spacing:0.85px">6.00</div>
<div id="c6_3" class="t td" style="left:655.75px;top:953.50px;font-size:29.00px;line-height:42px;color:#333333;font-weight:bold;letter-spacing:0.89px">63.00<span class="pc">%</span></div>
<div id="c6_4" class="t td" style="left:877.75px;top:953.50px;font-size:29.00px;line-height:42px;color:#2f2f2f;font-weight:normal;letter-spacing:0.85px"><span class="o1"></span>62.00</div>
<div id="c6_5" class="t td" style="left:1057.75px;top:953.50px;font-size:29.00px;line-height:42px;color:#2f2f2f;font-weight:normal;letter-spacing:0.85px"><span class="o1"></span>02.06</div>
<div id="c6_6" class="t td" style="left:1209.75px;top:953.50px;font-size:29.00px;line-height:42px;color:#333333;font-weight:bold;letter-spacing:0.89px">59.94</div>
<div id="c6_7" class="t td" style="left:1366.75px;top:953.50px;font-size:29.00px;line-height:42px;color:#333333;font-weight:bold;letter-spacing:0.89px">$<span class="b1"></span>2,247.20</div>
<div id="c6_8" class="t td" style="left:1572.75px;top:953.50px;font-size:29.00px;line-height:42px;color:#2f2f2f;font-weight:normal;letter-spacing:0.85px">$<span class="o1"></span>9,440.00</div>
<div id="c6_9" class="t td" style="left:1781.75px;top:953.50px;font-size:29.00px;line-height:42px;color:#333333;font-weight:bold;letter-spacing:0.89px">$7,<span class="b1"></span>92.80</div>
<div id="c6_10" class="t td" style="left:1981.75px;top:953.50px;font-size:29.00px;line-height:42px;color:#2f2f2f;font-weight:normal;letter-spacing:0.85px">$<span class="o1"></span>6,524.00</div>
<div id="c6_11" class="t td" style="left:2189.75px;top:953.50px;font-size:29.00px;line-height:42px;color:#333333;font-weight:bold;letter-spacing:0.89px">$4,276.80</div>
<div id="c6_12" class="t td" style="left:2382.75px;top:953.50px;font-size:29.00px;line-height:42px;color:#2f2f2f;font-weight:normal;letter-spacing:0.85px">949</div>
<div id="c6_13" class="t td" style="left:2582.75px;top:953.50px;font-size:29.00px;line-height:42px;color:#333333;font-weight:bold;letter-spacing:0.89px">86<span class="b1"></span></div>
<div id="c6_14" class="t td" style="left:2766.75px;top:953.50px;font-size:29.00px;line-height:42px;color:#333333;font-weight:bold;letter-spacing:0.89px">88</div>
<div id="c6_15" class="t td" style="left:2932.75px;top:953.50px;font-size:29.00px;line-height:42px;color:#2f2f2f;font-weight:normal;letter-spacing:0.85px">90.8<span class="pc">%</span></div>
<div id="c7_0" class="t td" style="left:23.75px;top:1063.00px;font-size:29.00px;line-height:42px;color:#2f2f2f;font-weight:normal;letter-spacing:0.85px">T<span class="hy"></span>2 T<span class="hy"></span>2</div>
<div id="c7_1" class="t td" style="left:237.75px;top:1063.00px;font-size:29.00px;line-height:42px;color:#2f2f2f;font-weight:normal;letter-spacing:0.85px">80.00</div>
<div id="c7_2" class="t td" style="left:442.75px;top:1063.00px;font-size:29.00px;line-height:42px;color:#2f2f2f;font-weight:normal;letter-spacing:0.85px">8.00</div>
<div id="c7_3" class="t td" style="left:655.75px;top:1063.00px;font-size:29.00px;line-height:42px;color:#333333;font-weight:bold;letter-spacing:0.89px">63.00<span class="pc">%</span></div>
<div id="c7_4" class="t td" style="left:877.75px;top:1063.00px;font-size:29.00px;line-height:42px;color:#2f2f2f;font-weight:normal;letter-spacing:0.85px">2<span class="o1"></span>6.00</div>
<div id="c7_5" class="t td" style="left:1057.75px;top:1063.00px;font-size:29.00px;line-height:42px;color:#2f2f2f;font-weight:normal;letter-spacing:0.85px"><span class="o1"></span>36.08</div>
<div id="c7_6" class="t td" style="left:1209.75px;top:1063.00px;font-size:29.00px;line-height:42px;color:#333333;font-weight:bold;letter-spacing:0.89px">79.92</div>
<div id="c7_7" class="t td" style="left:1366.75px;top:1063.00px;font-size:29.00px;line-height:42px;color:#333333;font-weight:bold;letter-spacing:0.89px">$<span class="b1"></span>0,886.40</div>
<div id="c7_8" class="t td" style="left:1572.75px;top:1063.00px;font-size:29.00px;line-height:42px;color:#2f2f2f;font-weight:normal;letter-spacing:0.85px">$<span class="o1"></span>7,280.00</div>
<div id="c7_9" class="t td" style="left:1781.75px;top:1063.00px;font-size:29.00px;line-height:42px;color:#333333;font-weight:bold;letter-spacing:0.89px">$6,393.60</div>
<div id="c7_10" class="t td" style="left:1981.75px;top:1063.00px;font-size:29.00px;line-height:42px;color:#2f2f2f;font-weight:normal;letter-spacing:0.85px">$<span class="o1"></span>4,688.00</div>
<div id="c7_11" class="t td" style="left:2189.75px;top:1063.00px;font-size:29.00px;line-height:42px;color:#333333;font-weight:bold;letter-spacing:0.89px">$3,80<span class="b1"></span>.60</div>
<div id="c7_12" class="t td" style="left:2382.75px;top:1063.00px;font-size:29.00px;line-height:42px;color:#2f2f2f;font-weight:normal;letter-spacing:0.85px">8<span class="o1"></span>8</div>
<div id="c7_13" class="t td" style="left:2582.75px;top:1063.00px;font-size:29.00px;line-height:42px;color:#333333;font-weight:bold;letter-spacing:0.89px">647</div>
<div id="c7_14" class="t td" style="left:2766.75px;top:1063.00px;font-size:29.00px;line-height:42px;color:#333333;font-weight:bold;letter-spacing:0.89px"><span class="b1"></span>7<span class="b1"></span></div>
<div id="c7_15" class="t td" style="left:2932.75px;top:1063.00px;font-size:29.00px;line-height:42px;color:#2f2f2f;font-weight:normal;letter-spacing:0.85px">79.2<span class="pc">%</span></div>
<div id="c8_0" class="t td" style="left:23.75px;top:1173.00px;font-size:29.00px;line-height:42px;color:#2f2f2f;font-weight:normal;letter-spacing:0.85px">T<span class="hy"></span>3 T<span class="hy"></span>3</div>
<div id="c8_1" class="t td" style="left:237.75px;top:1173.00px;font-size:29.00px;line-height:42px;color:#2f2f2f;font-weight:normal;letter-spacing:0.85px">240.00</div>
<div id="c8_2" class="t td" style="left:442.75px;top:1173.00px;font-size:29.00px;line-height:42px;color:#2f2f2f;font-weight:normal;letter-spacing:0.85px"><span class="o1"></span>2.00</div>
<div id="c8_3" class="t td" style="left:655.75px;top:1173.00px;font-size:29.00px;line-height:42px;color:#333333;font-weight:bold;letter-spacing:0.89px">67.00<span class="pc">%</span></div>
<div id="c8_4" class="t td" style="left:877.75px;top:1173.00px;font-size:29.00px;line-height:42px;color:#2f2f2f;font-weight:normal;letter-spacing:0.85px">324.00</div>
<div id="c8_5" class="t td" style="left:1057.75px;top:1173.00px;font-size:29.00px;line-height:42px;color:#2f2f2f;font-weight:normal;letter-spacing:0.85px">2<span class="o1"></span>7.08</div>
<div id="c8_6" class="t td" style="left:1209.75px;top:1173.00px;font-size:29.00px;line-height:42px;color:#333333;font-weight:bold;letter-spacing:0.89px"><span class="b1"></span>06.92</div>
<div id="c8_7" class="t td" style="left:1366.75px;top:1173.00px;font-size:29.00px;line-height:42px;color:#333333;font-weight:bold;letter-spacing:0.89px">$52,099.20</div>
<div id="c8_8" class="t td" style="left:1572.75px;top:1173.00px;font-size:29.00px;line-height:42px;color:#2f2f2f;font-weight:normal;letter-spacing:0.85px">$77,760.00</div>
<div id="c8_9" class="t td" style="left:1781.75px;top:1173.00px;font-size:29.00px;line-height:42px;color:#333333;font-weight:bold;letter-spacing:0.89px">$25,660.80</div>
<div id="c8_10" class="t td" style="left:1981.75px;top:1173.00px;font-size:29.00px;line-height:42px;color:#2f2f2f;font-weight:normal;letter-spacing:0.85px">$66,096.00</div>
<div id="c8_11" class="t td" style="left:2189.75px;top:1173.00px;font-size:29.00px;line-height:42px;color:#333333;font-weight:bold;letter-spacing:0.89px">$<span class="b1"></span>3,996.80</div>
<div id="c8_12" class="t td" style="left:2382.75px;top:1173.00px;font-size:29.00px;line-height:42px;color:#2f2f2f;font-weight:normal;letter-spacing:0.85px">848</div>
<div id="c8_13" class="t td" style="left:2582.75px;top:1173.00px;font-size:29.00px;line-height:42px;color:#333333;font-weight:bold;letter-spacing:0.89px">843</div>
<div id="c8_14" class="t td" style="left:2766.75px;top:1173.00px;font-size:29.00px;line-height:42px;color:#333333;font-weight:bold;letter-spacing:0.89px">5</div>
<div id="c8_15" class="t td" style="left:2932.75px;top:1173.00px;font-size:29.00px;line-height:42px;color:#2f2f2f;font-weight:normal;letter-spacing:0.85px">99.5<span class="pc">%</span></div>
</div>
</body>
</html>
